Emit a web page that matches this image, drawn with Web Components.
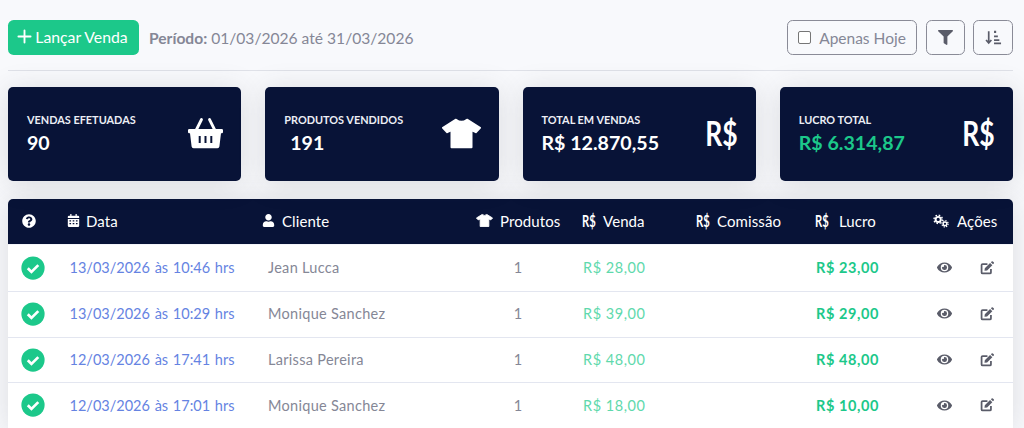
<!DOCTYPE html>
<html lang="pt-BR">
  <head>
    <meta charset="utf-8">
    <title>Vendas</title>
<style>
  html, body { height: 100%; overflow: hidden; }
  body {
    margin: 0;
    background: #f8f9fc;
    font-family: Lato, "Noto Sans", sans-serif;
    color: #858796;
    --cols: 45px 197px 220px 100px 114px 119px 118px 92px;
    --navy: #081337;
    --green: #1cc88a;
  }
  #page { display: block; padding: 20px 11px 0 8px; }
</style>
  </head>
  <body>
    <sales-page id="page">
      <sales-toolbar period="01/03/2026 até 31/03/2026"></sales-toolbar>
      <stat-grid>
        <stat-card label="VENDAS EFETUADAS" value="90"><fa-icon name="basket" size="35"></fa-icon></stat-card>
        <stat-card label="PRODUTOS VENDIDOS" value="191" indent="6"><fa-icon name="shirt" size="39"></fa-icon></stat-card>
        <stat-card label="TOTAL EM VENDAS" value="R$ 12.870,55"><money-mark></money-mark></stat-card>
        <stat-card label="LUCRO TOTAL" value="R$ 6.314,87" tone="green"><money-mark></money-mark></stat-card>
      </stat-grid>
      <sales-table>
        <sale-row date="13/03/2026" time="10:46" client="Jean Lucca" qty="1" sale="R$ 28,00" profit="R$ 23,00"></sale-row>
        <sale-row date="13/03/2026" time="10:29" client="Monique Sanchez" qty="1" sale="R$ 39,00" profit="R$ 29,00"></sale-row>
        <sale-row date="12/03/2026" time="17:41" client="Larissa Pereira" qty="1" sale="R$ 48,00" profit="R$ 48,00"></sale-row>
        <sale-row date="12/03/2026" time="17:01" client="Monique Sanchez" qty="1" sale="R$ 18,00" profit="R$ 10,00"></sale-row>
      </sales-table>
    </sales-page>

<script>
const ICONS = {
  plus: ['0 0 16 16', '<path d="M8 1.5v13M1.5 8h13" stroke="currentColor" stroke-width="2" stroke-linecap="round" fill="none"/>'],
  filter: ['0 0 512 512', '<path d="M487.976 0H24.028C2.71 0-8.047 25.866 7.058 40.971L192 225.941V432c0 7.831 3.821 15.17 10.237 19.662l80 55.98C298.02 518.69 320 507.493 320 487.98V225.941l184.947-184.97C520.021 25.896 509.338 0 487.976 0z"/>'],
  sort: ['0 0 16 16', '<path d="M3.5 2v11M1 10.4l2.5 2.8 2.5-2.8" stroke="currentColor" stroke-width="1.6" fill="none"/><path d="M8.5 1.6h2v2.2h-2zM8.5 6h3.6v1.8H8.5zM8.5 9.6h5v1.8h-5zM8.5 12.6h6.6v1.8H8.5z"/>'],
  basket: ['0 0 35 35', '<path d="M8 14.500L13.500 3.500M27 14.500L21.500 3.500" stroke="currentColor" stroke-width="2.800" stroke-linecap="round" fill="none"/><path fill-rule="evenodd" d="M1.200 13h32.600a1.200 1.200 0 0 1 1.200 1.200v1.800a1.200 1.200 0 0 1-1.200 1.200h-.8l-1.600 13.400a2 2 0 0 1-2 1.700H5.600a2 2 0 0 1-2-1.700L2 17.200h-.8A1.200 1.200 0 0 1 0 16v-1.800A1.200 1.200 0 0 1 1.200 13zM10.700 20v7h2v-7zM16.500 20v7h2v-7zM22.300 20v7h2v-7z"/>'],
  shirt: ['0 0 39 30', '<path d="M14 1.200Q19.500 5.500 25 1.200L38 9.300 33.800 13.700 29.500 11.500V28.800H9.500V11.500L5.200 13.700 1 9.300z" stroke="currentColor" stroke-width="2" stroke-linejoin="round"/>'],
  question: ['0 0 512 512', '<path d="M504 256c0 136.997-111.043 248-248 248S8 392.997 8 256C8 119.083 119.043 8 256 8s248 111.083 248 248zM262.655 90c-54.497 0-89.255 22.957-116.549 63.758-3.536 5.286-2.353 12.415 2.715 16.258l34.699 26.31c5.205 3.947 12.621 3.008 16.665-2.122 17.864-22.658 30.113-35.797 57.303-35.797 20.429 0 45.698 13.148 45.698 32.958 0 14.976-12.363 22.667-32.534 33.976C247.128 238.528 216 254.941 216 296v4c0 6.627 5.373 12 12 12h56c6.627 0 12-5.373 12-12v-1.333c0-28.462 83.186-29.647 83.186-106.667 0-58.002-60.165-102-116.531-102zM256 338c-25.365 0-46 20.635-46 46 0 25.364 20.635 46 46 46s46-20.636 46-46c0-25.365-20.635-46-46-46z"/>'],
  calendar: ['0 0 14 16', '<path fill-rule="evenodd" d="M3 0h1.500v2h5V0H11v2h1.500A1.500 1.500 0 0 1 14 3.500V5H0V3.500A1.500 1.500 0 0 1 1.500 2H3zM0 6h14v8.500a1.500 1.500 0 0 1-1.500 1.500h-11A1.500 1.500 0 0 1 0 14.500zM2 7.700v1.600h2V7.700zm4 0v1.600h2V7.700zm4 0v1.600h2V7.700zm-8 3.300v1.600h2V11zm4 0v1.600h2V11zm4 0v1.600h2V11z"/>'],
  user: ['0 0 448 512', '<path d="M224 256c70.700 0 128-57.300 128-128S294.700 0 224 0 96 57.300 96 128s57.300 128 128 128zm89.600 32h-16.700c-22.200 10.200-46.900 16-72.900 16s-50.600-5.800-72.900-16h-16.700C60.200 288 0 348.200 0 422.400V464c0 26.500 21.500 48 48 48h352c26.500 0 48-21.500 48-48v-41.600c0-74.200-60.200-134.400-134.400-134.400z"/>'],
  cogs: ['0 0 20 16', '<circle cx="6.500" cy="6" r="3.200" fill="none" stroke="currentColor" stroke-width="2.400"/><circle cx="6.500" cy="6" r="5.200" fill="none" stroke="currentColor" stroke-width="1.800" stroke-dasharray="2 2.080"/><circle cx="15" cy="11.500" r="2.300" fill="none" stroke="currentColor" stroke-width="1.800"/><circle cx="15" cy="11.500" r="3.900" fill="none" stroke="currentColor" stroke-width="1.500" stroke-dasharray="1.600 1.460"/>'],
  check: ['0 0 512 512', '<circle cx="256" cy="256" r="248"/><path d="M145 262l78 78 146-146" fill="none" stroke="#fff" stroke-width="58"/>'],
  eye: ['0 0 576 512', '<path d="M572.520 241.400C518.290 135.590 410.930 64 288 64S57.680 135.640 3.480 241.410a32.350 32.350 0 0 0 0 29.190C57.710 376.410 165.070 448 288 448s230.320-71.640 284.520-177.410a32.350 32.350 0 0 0 0-29.190zM288 400a144 144 0 1 1 144-144 143.930 143.930 0 0 1-144 144zm0-240a95.310 95.310 0 0 0-25.310 3.790 47.850 47.850 0 0 1-66.900 66.900A95.780 95.780 0 1 0 288 160z"/>'],
  edit: ['0 0 16 16', '<path d="M12.500 9.200V13a1.200 1.200 0 0 1-1.200 1.200H3A1.200 1.200 0 0 1 1.800 13V4.700A1.200 1.200 0 0 1 3 3.500h5.500" fill="none" stroke="currentColor" stroke-width="2"/><path d="M5.500 8.200l6-6 2.600 2.600-6 6-3 .4zM12.400 1.400l.9-.9a1 1 0 0 1 1.400 0l1 1a1 1 0 0 1 0 1.400l-.9.900z"/>']
};

class FaIcon extends HTMLElement {
  connectedCallback() {
    const [box, body] = ICONS[this.getAttribute('name')];
    const size = this.getAttribute('size') || 14;
    this.attachShadow({mode: 'open'}).innerHTML = `
      <style>
        :host { display: inline-flex; line-height: 0; flex: none; }
        svg { fill: currentColor; }
      </style>
      <svg width="${size}" height="${size}" viewBox="${box}">${body}</svg>`;
  }
}
customElements.define('fa-icon', FaIcon);

class MoneyMark extends HTMLElement {
  connectedCallback() {
    this.attachShadow({mode: 'open'}).innerHTML = `
      <style>
        :host {
          display: inline-block;
          font: bold var(--mark, 34px)/1 Lato, sans-serif;
          transform: scaleX(var(--squeeze, .78));
          transform-origin: right center;
          white-space: nowrap;
        }
      </style>R$`;
  }
}
customElements.define('money-mark', MoneyMark);

class SalesPage extends HTMLElement {
  constructor() {
    super();
    this.attachShadow({mode: 'open'}).innerHTML = `
      <style>:host { display: block; }</style>
      <slot></slot>`;
  }
}
customElements.define('sales-page', SalesPage);

class SalesToolbar extends HTMLElement {
  connectedCallback() {
    this.attachShadow({mode: 'open'}).innerHTML = `
      <style>
        :host {
          display: flex;
          align-items: center;
          height: 35px;
          padding-bottom: 15px;
          border-bottom: 1px solid #dfe1e8;
          font-size: 16px;
        }
        button {
          font: inherit;
          height: 35px;
          box-sizing: border-box;
          display: inline-flex;
          align-items: center;
          justify-content: center;
          border-radius: 5.6px;
          padding: 0;
        }
        .add {
          width: 131px;
          background: var(--green);
          border: 0;
          color: #fff;
          gap: 3px;
          font-size: 15.800px;
          padding: 0 2px 2px 0;
        }
        .period { margin-left: 10px; flex: 1; font-size: 15.600px; }
        .period b { font-weight: 700; }
        .ghost {
          background: transparent;
          border: 1px solid #8a8b97;
          color: #5a5c69;
          margin-left: 9px;
        }
        .today { width: 130px; color: #858796; gap: 8px; font-size: 15.500px; }
        .today i {
          width: 11px;
          height: 11px;
          border: 1px solid #767676;
          border-radius: 2px;
          background: #fff;
        }
        .square { width: 39px; }
        .sort { width: 40px; margin-left: 8px; }
      </style>
      <button class="add"><fa-icon name="plus" size="15"></fa-icon>Lançar Venda</button>
      <span class="period"><b>Período:</b> ${this.getAttribute('period')}</span>
      <button class="ghost today"><i></i>Apenas Hoje</button>
      <button class="ghost square"><fa-icon name="filter" size="15"></fa-icon></button>
      <button class="ghost sort"><fa-icon name="sort" size="17"></fa-icon></button>`;
  }
}
customElements.define('sales-toolbar', SalesToolbar);

class StatGrid extends HTMLElement {
  constructor() {
    super();
    this.attachShadow({mode: 'open'}).innerHTML = `
      <style>
        :host {
          display: grid;
          grid-template-columns: repeat(4, 1fr);
          gap: 24px;
          margin-top: 16px;
        }
      </style>
      <slot></slot>`;
  }
}
customElements.define('stat-grid', StatGrid);

class StatCard extends HTMLElement {
  connectedCallback() {
    const green = this.getAttribute('tone') === 'green';
    const indent = this.getAttribute('indent') || 0;
    this.attachShadow({mode: 'open'}).innerHTML = `
      <style>
        :host {
          display: flex;
          align-items: center;
          justify-content: space-between;
          height: 94px;
          box-sizing: border-box;
          padding: 0 18px 0 19px;
          background: var(--navy);
          color: #fff;
          border-radius: 5px;
          box-shadow: 0 2.400px 28px rgba(58, 59, 69, .15);
        }
        .label { font-size: 10.900px; font-weight: 700; line-height: 14px; color: #eceef5; }
        .value {
          font-size: 19.600px;
          font-weight: 700;
          line-height: 26px;
          margin-top: 3px;
          padding-left: ${indent}px;
          color: ${green ? 'var(--green)' : '#fff'};
        }
        .text { margin-top: 1px; }
        .mark { display: flex; margin-top: -2px; }
      </style>
      <div class="text">
        <div class="label">${this.getAttribute('label')}</div>
        <div class="value">${this.getAttribute('value')}</div>
      </div>
      <div class="mark"><slot></slot></div>`;
  }
}
customElements.define('stat-card', StatCard);

class SalesTable extends HTMLElement {
  constructor() {
    super();
    this.attachShadow({mode: 'open'}).innerHTML = `
      <style>
        :host {
          display: block;
          margin-top: 18px;
          background: #fff;
          border-radius: 5px 5px 0 0;
          box-shadow: 0 2.400px 28px rgba(58, 59, 69, .15);
        }
        header {
          display: grid;
          grid-template-columns: var(--cols);
          height: 45px;
          padding-bottom: 2px;
          box-sizing: border-box;
          align-items: center;
          background: var(--navy);
          color: #fff;
          border-radius: 5px 5px 0 0;
          font-size: 15px;
          letter-spacing: .1px;
          --mark: 17px;
          --squeeze: .66;
        }
        header > div { display: flex; align-items: center; gap: 6px; padding-left: 12px; white-space: nowrap; }
        header > .status { padding-left: 14px; }
        header > .date { padding-left: 14px; }
        header > .client { gap: 7px; }
        header > .qty { padding-left: 6px; gap: 7px; }
        header > .acts { padding-left: 12px; gap: 8px; }
        money-mark { transform-origin: left center; margin-right: -6px; }
        .profit money-mark { margin-right: -3px; }
      </style>
      <header>
        <div class="status"><fa-icon name="question" size="14"></fa-icon></div>
        <div class="date"><fa-icon name="calendar" size="13"></fa-icon>Data</div>
        <div class="client"><fa-icon name="user" size="13"></fa-icon>Cliente</div>
        <div class="qty"><fa-icon name="shirt" size="17"></fa-icon>Produtos</div>
        <div><money-mark></money-mark>Venda</div>
        <div><money-mark></money-mark>Comissão</div>
        <div class="profit"><money-mark></money-mark>Lucro</div>
        <div class="acts"><fa-icon name="cogs" size="16"></fa-icon>Ações</div>
      </header>
      <slot></slot>`;
  }
}
customElements.define('sales-table', SalesTable);

class SaleRow extends HTMLElement {
  connectedCallback() {
    const a = n => this.getAttribute(n);
    this.attachShadow({mode: 'open'}).innerHTML = `
      <style>
        :host {
          display: grid;
          grid-template-columns: var(--cols);
          height: 45.700px;
          box-sizing: border-box;
          padding-bottom: 1px;
          align-items: center;
          border-top: 1px solid #e3e6f0;
          font-size: 14.500px;
          color: #858796;
        }
        :host(:first-of-type) { border-top-color: #f4f5fa; height: 47px; }
        .status { display: flex; padding-left: 13px; color: var(--green); }
        .date { text-align: center; color: #6583e2; word-spacing: 1px; padding-left: 1px; }
        .client { padding-left: 18px; letter-spacing: .3px; }
        .qty { text-align: center; padding-right: 4px; }
        .money { padding-left: 13px; color: #5fd9ac; letter-spacing: .55px; }
        .profit { padding-left: 13px; color: var(--green); font-weight: 700; letter-spacing: .6px; }
        .acts { display: flex; color: #5a5c69; padding-left: 16px; gap: 28px; align-items: center; }
      </style>
      <div class="status"><fa-icon name="check" size="24"></fa-icon></div>
      <div class="date">${a('date')} às ${a('time')} hrs</div>
      <div class="client">${a('client')}</div>
      <div class="qty">${a('qty')}</div>
      <div class="money">${a('sale')}</div>
      <div></div>
      <div class="profit">${a('profit')}</div>
      <div class="acts"><fa-icon name="eye" size="15"></fa-icon><fa-icon name="edit" size="14"></fa-icon></div>`;
  }
}
customElements.define('sale-row', SaleRow);
</script>
  </body>
</html>
